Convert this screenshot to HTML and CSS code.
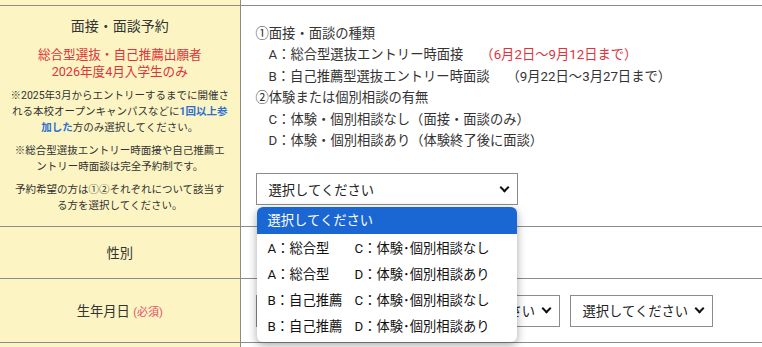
FILE: index.html
```html
<!DOCTYPE html>
<html lang="ja">
<head>
  <meta charset="UTF-8" />
  <meta name="viewport" content="width=device-width, initial-scale=1.0"/>
  <title>面接・面談予約</title>
  <link rel="stylesheet" href="styles.css">
</head>
<body>

  <table class="form-table">
    <colgroup>
      <col class="col-label">
      <col>
    </colgroup>
    <tr class="cut-row">
      <th></th>
      <td></td>
    </tr>
    <tr>
      <th class="label-main">
        <div class="label-title">面接・面談予約</div>
        <div class="label-red">総合型選抜・自己推薦出願者<br>2026年度4月入学生のみ</div>
        <p class="note">※2025年3月からエントリーするまでに開催される本校オープンキャンパスなどに<b class="blue">1回以上参加した</b>方のみ選択してください。</p>
        <p class="note">※総合型選抜エントリー時面接や自己推薦エントリー時面談は完全予約制です。</p>
        <p class="note">予約希望の方は①②それぞれについて該当する方を選択してください。</p>
      </th>
      <td class="field-main">
        <div class="info">
          <div>①面接・面談の種類</div>
          <div class="indent">A：総合型選抜エントリー時面接<span class="term red">（6月2日～9月12日まで）</span></div>
          <div class="indent">B：自己推薦型選抜エントリー時面談<span class="term">（9月22日～3月27日まで）</span></div>
          <div>②体験または個別相談の有無</div>
          <div class="indent">C：体験・個別相談なし（面接・面談のみ）</div>
          <div class="indent">D：体験・個別相談あり（体験終了後に面談）</div>
        </div>

        <div class="select-wrap">
          <div class="fake-select wide">選択してください<span class="chev"></span></div>

          <!-- 開いた状態のプルダウン -->
          <ul class="dropdown">
            <li class="active">選択してください</li>
            <li><span class="opt-a">A：総合型</span>C：体験･個別相談なし</li>
            <li><span class="opt-a">A：総合型</span>D：体験･個別相談あり</li>
            <li><span class="opt-a">B：自己推薦</span>C：体験･個別相談なし</li>
            <li><span class="opt-a">B：自己推薦</span>D：体験･個別相談あり</li>
          </ul>
        </div>
      </td>
    </tr>
    <tr class="row-sex">
      <th>性別</th>
      <td></td>
    </tr>
    <tr class="row-birth">
      <th>生年月日 <span class="required">(必須)</span></th>
      <td>
        <div class="date-row">
          <div class="fake-select year">選択してください<span class="chev"></span></div>
          <div class="fake-select">選択してください<span class="chev"></span></div>
          <div class="fake-select">選択してください<span class="chev"></span></div>
        </div>
      </td>
    </tr>
    <tr class="cut-row">
      <th></th>
      <td></td>
    </tr>
  </table>

</body>
</html>
```

FILE: styles.css
```css
body {
  margin: 0;
  padding: 0;
  overflow: hidden;
  background: #fff;
  color: #333;
  font-family: Roboto, "Noto Sans CJK JP", sans-serif;
  font-size: 13.3px;
}

.form-table {
  border-collapse: collapse;
  table-layout: fixed;
  width: 780px;
  margin-top: -1px;
}

.col-label {
  width: 240px;
}

.form-table th,
.form-table td {
  border-top: 1px solid #8c8c8c;
  border-bottom: 1px solid #8c8c8c;
  padding: 0;
}

.form-table th {
  border-right: 1px solid #8c8c8c;
  background: #fcf5c3;
  font-weight: normal;
  text-align: center;
  vertical-align: middle;
}

.form-table td {
  background: #fff;
  text-align: left;
  vertical-align: top;
}

.cut-row th,
.cut-row td {
  height: 5px;
}

/* 面接・面談予約 */
.label-main {
  padding: 10px 10px 12px !important;
}

.label-title {
  font-size: 14px;
  line-height: 20px;
}

.label-red {
  margin-top: 10px;
  color: #e0323c;
  font-size: 12.6px;
  line-height: 17px;
}

.note {
  margin: 7px 0 0;
  font-size: 10.5px;
  line-height: 16px;
}

.label-red + .note {
  margin-top: 8px;
}

.blue {
  color: #2d6fd2;
}

.field-main {
  padding: 17px 15px 19px !important;
}

.info {
  line-height: 21.4px;
}

.indent {
  padding-left: 13px;
}

.term {
  margin-left: 17px;
}

.red {
  color: #e0323c;
}

/* セレクト */
.select-wrap {
  position: relative;
  margin-top: 22px;
  width: 262px;
}

.fake-select {
  box-sizing: border-box;
  display: flex;
  align-items: center;
  justify-content: space-between;
  width: 143px;
  height: 32px;
  padding: 0 9px 0 12px;
  border: 1px solid #8c8c8c;
  background: #fff;
  color: #222;
  white-space: nowrap;
}

.fake-select.wide {
  width: 262px;
}

.fake-select.year {
  width: 151px;
}

.chev {
  width: 5px;
  height: 5px;
  margin-top: -4px;
  border-right: 2px solid #111;
  border-bottom: 2px solid #111;
  transform: rotate(45deg);
}

.dropdown {
  position: absolute;
  top: 34px;
  left: 1px;
  width: 260px;
  margin: 0;
  padding: 0 0 2px;
  list-style: none;
  background: #fff;
  border-radius: 6px;
  box-shadow: 0 3px 10px rgba(0, 0, 0, 0.35);
  overflow: hidden;
  z-index: 5;
}

.dropdown li {
  height: 26px;
  line-height: 26px;
  padding-left: 11px;
  color: #111;
  white-space: nowrap;
}

.dropdown li.active {
  height: 27px;
  margin-bottom: 2px;
  line-height: 27px;
  background: #1a66d2;
  color: #fff;
}

.opt-a {
  display: inline-block;
  width: 87px;
}

/* 性別 */
.row-sex th,
.row-sex td {
  height: 51px;
}

/* 生年月日 */
.row-birth th,
.row-birth td {
  height: 63px;
}

.row-birth td {
  vertical-align: middle;
  padding-left: 15px;
}

.required {
  color: #e0506a;
  font-size: 11px;
}

.date-row {
  display: flex;
  gap: 10px;
}
```
